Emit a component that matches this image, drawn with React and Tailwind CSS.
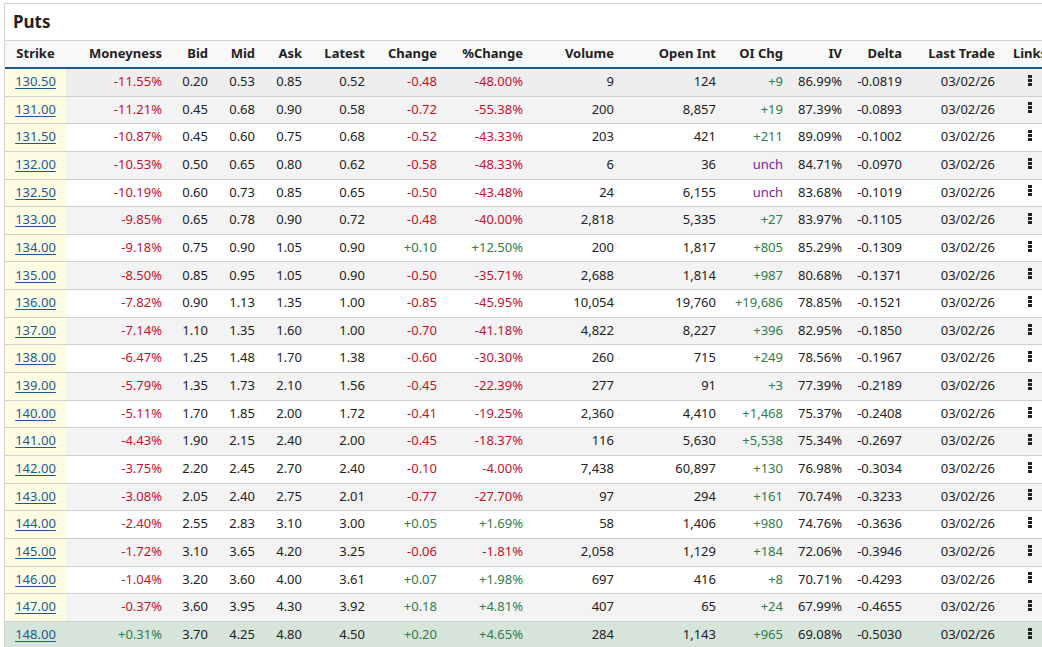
import React from "react";

const rows = [
  ["130.50","-11.55%","0.20","0.53","0.85","0.52","-0.48","-48.00%","9","124","+9","86.99%","-0.0819"],
  ["131.00","-11.21%","0.45","0.68","0.90","0.58","-0.72","-55.38%","200","8,857","+19","87.39%","-0.0893"],
  ["131.50","-10.87%","0.45","0.60","0.75","0.68","-0.52","-43.33%","203","421","+211","89.09%","-0.1002"],
  ["132.00","-10.53%","0.50","0.65","0.80","0.62","-0.58","-48.33%","6","36","unch","84.71%","-0.0970"],
  ["132.50","-10.19%","0.60","0.73","0.85","0.65","-0.50","-43.48%","24","6,155","unch","83.68%","-0.1019"],
  ["133.00","-9.85%","0.65","0.78","0.90","0.72","-0.48","-40.00%","2,818","5,335","+27","83.97%","-0.1105"],
  ["134.00","-9.18%","0.75","0.90","1.05","0.90","+0.10","+12.50%","200","1,817","+805","85.29%","-0.1309"],
  ["135.00","-8.50%","0.85","0.95","1.05","0.90","-0.50","-35.71%","2,688","1,814","+987","80.68%","-0.1371"],
  ["136.00","-7.82%","0.90","1.13","1.35","1.00","-0.85","-45.95%","10,054","19,760","+19,686","78.85%","-0.1521"],
  ["137.00","-7.14%","1.10","1.35","1.60","1.00","-0.70","-41.18%","4,822","8,227","+396","82.95%","-0.1850"],
  ["138.00","-6.47%","1.25","1.48","1.70","1.38","-0.60","-30.30%","260","715","+249","78.56%","-0.1967"],
  ["139.00","-5.79%","1.35","1.73","2.10","1.56","-0.45","-22.39%","277","91","+3","77.39%","-0.2189"],
  ["140.00","-5.11%","1.70","1.85","2.00","1.72","-0.41","-19.25%","2,360","4,410","+1,468","75.37%","-0.2408"],
  ["141.00","-4.43%","1.90","2.15","2.40","2.00","-0.45","-18.37%","116","5,630","+5,538","75.34%","-0.2697"],
  ["142.00","-3.75%","2.20","2.45","2.70","2.40","-0.10","-4.00%","7,438","60,897","+130","76.98%","-0.3034"],
  ["143.00","-3.08%","2.05","2.40","2.75","2.01","-0.77","-27.70%","97","294","+161","70.74%","-0.3233"],
  ["144.00","-2.40%","2.55","2.83","3.10","3.00","+0.05","+1.69%","58","1,406","+980","74.76%","-0.3636"],
  ["145.00","-1.72%","3.10","3.65","4.20","3.25","-0.06","-1.81%","2,058","1,129","+184","72.06%","-0.3946"],
  ["146.00","-1.04%","3.20","3.60","4.00","3.61","+0.07","+1.98%","697","416","+8","70.71%","-0.4293"],
  ["147.00","-0.37%","3.60","3.95","4.30","3.92","+0.18","+4.81%","407","65","+24","67.99%","-0.4655"],
  ["148.00","+0.31%","3.70","4.25","4.80","4.50","+0.20","+4.65%","284","1,143","+965","69.08%","-0.5030"],
];

const cols = [
  { h: "Strike", w: "w-[61px]", a: "justify-center" },
  { h: "Moneyness", w: "w-[96px]", a: "justify-end" },
  { h: "Bid", w: "w-[46px]", a: "justify-end" },
  { h: "Mid", w: "w-[47px]", a: "justify-end" },
  { h: "Ask", w: "w-[47px]", a: "justify-end" },
  { h: "Latest", w: "w-[63px]", a: "justify-end" },
  { h: "Change", w: "w-[72px]", a: "justify-end" },
  { h: "%Change", w: "w-[86px]", a: "justify-end" },
  { h: "Volume", w: "w-[91px]", a: "justify-end" },
  { h: "Open Int", w: "w-[102px]", a: "justify-end" },
  { h: "OI Chg", w: "w-[67px]", a: "justify-end" },
  { h: "IV", w: "w-[59px]", a: "justify-end" },
  { h: "Delta", w: "w-[60px]", a: "justify-end" },
  { h: "Last Trade", w: "w-[93px]", a: "justify-end" },
  { h: "Links", w: "w-[70px]", a: "justify-center" },
];

function color(v) {
  if (v === "unch") return "text-[#7b1fa2]";
  if (v.startsWith("+")) return "text-[#2e7d4e]";
  if (v.startsWith("-")) return "text-[#c8102e]";
  return "text-[#222]";
}

function Dots() {
  return (
    <svg width="4" height="11" viewBox="0 0 4 11" className="mb-[4px]">
      <rect x="0" y="0" width="4" height="3" fill="#222" />
      <rect x="0" y="4" width="4" height="3" fill="#222" />
      <rect x="0" y="8" width="4" height="3" fill="#222" />
    </svg>
  );
}

export default function App() {
  return (
    <div
      className="w-[1042px] h-[647px] overflow-hidden bg-white text-[13px] text-[#222]"
      style={{ fontFamily: '"Noto Sans", "Open Sans", sans-serif' }}
    >
      <div className="ml-[4px] mt-[3px] w-[1080px] border-l border-t border-[#d4d4d4]">
        <div className="h-[36px] flex items-center pl-[8px] text-[17px] font-bold">Puts</div>
        <div className="flex h-[29px] bg-[#f8f8f8] border-t border-[#d4d4d4] border-b-[2px] border-b-[#1d5a8c] font-bold">
          {cols.map((c) => (
            <div key={c.h} className={`${c.w} ${c.a} shrink-0 flex items-center`}>{c.h}</div>
          ))}
        </div>
        {rows.map((r, i) => {
          const last = i === rows.length - 1;
          const bg = last ? "bg-[#d6e4da]" : i === 0 ? "bg-[#eeeeee]" : i % 2 === 1 ? "bg-[#f3f3f3]" : "bg-white";
          return (
            <div key={r[0]} className={`flex h-[27.65px] border-b border-[#d0d0d0] ${bg}`}>
              <div className={`w-[61px] shrink-0 flex items-center justify-center pb-[1px] ${last ? "" : "bg-[#fefde3]"}`}>
                <span className="text-[#1a5a96] underline underline-offset-2">{r[0]}</span>
              </div>
              {r.slice(1).map((v, j) => {
                const c = cols[j + 1];
                const colored = [1, 6, 7, 10].includes(j + 1);
                return (
                  <div key={j} className={`${c.w} ${c.a} shrink-0 flex items-center pb-[1px] ${colored ? color(v) : ""}`}>
                    {v}
                  </div>
                );
              })}
              <div className="w-[93px] shrink-0 flex items-center justify-end pb-[1px]">03/02/26</div>
              <div className="w-[70px] shrink-0 flex items-center justify-center">
                <Dots />
              </div>
            </div>
          );
        })}
      </div>
    </div>
  );
}
